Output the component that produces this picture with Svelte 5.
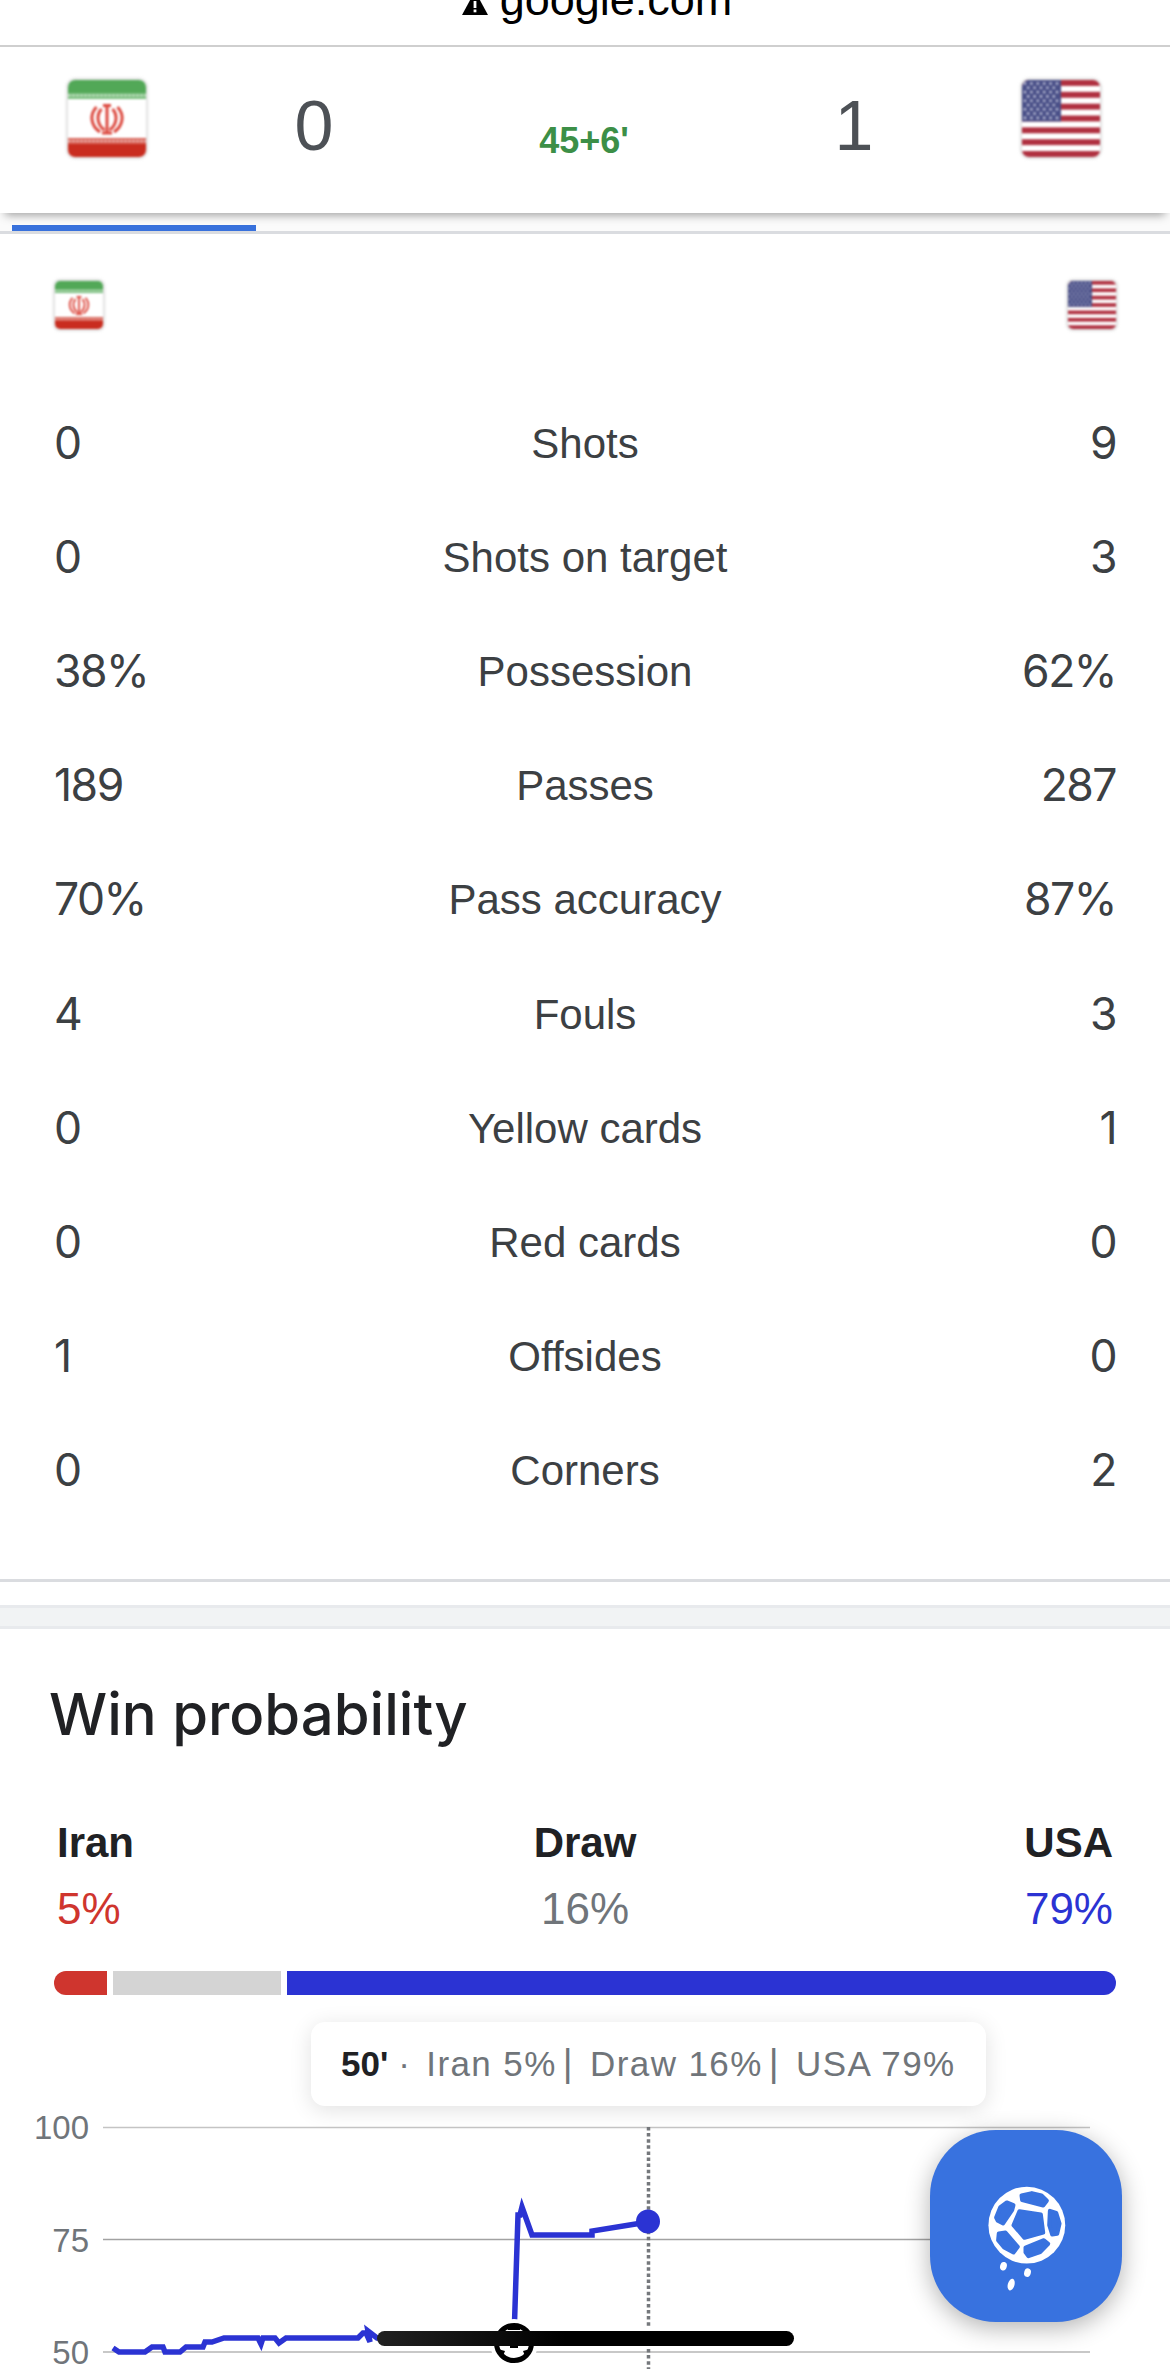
<script>
  const stats = [
    ['0', 'Shots', '9'],
    ['0', 'Shots on target', '3'],
    ['38%', 'Possession', '62%'],
    ['189', 'Passes', '287'],
    ['70%', 'Pass accuracy', '87%'],
    ['4', 'Fouls', '3'],
    ['0', 'Yellow cards', '1'],
    ['0', 'Red cards', '0'],
    ['1', 'Offsides', '0'],
    ['0', 'Corners', '2']
  ];

  const odds = [
    { name: 'Iran', pct: 5, cls: 'red' },
    { name: 'Draw', pct: 16, cls: 'grey' },
    { name: 'USA', pct: 79, cls: 'blue' }
  ];

  const stripes = [0, 2, 4, 6, 8, 10, 12];
  const stars = [];
  for (let r = 0; r < 9; r++) {
    const n = r % 2 ? 5 : 6;
    for (let c = 0; c < n; c++) {
      stars.push({ x: (r % 2 ? 6.2 : 3) + c * 6.4, y: 3.5 + r * 4.3 });
    }
  }

  const line = 'M113 2348 L119 2352 L145 2352 L152 2347 L163 2347 L165 2352 L180 2352 L186 2347 L203 2347 L205 2342 L212 2342 L224 2338 L258 2338 L261 2344 L263 2338 L275 2338 L279 2343 L286 2338 L358 2338 L363 2333 L366 2333 L370 2342 L368 2331 L377 2338 L514 2338 L518 2215 L520 2215 L522 2207 L532 2235 L592 2235 L592 2231 L648 2222';
</script>

{#snippet iran(cls)}
  <div class="flag {cls}">
    <svg viewBox="0 0 78 77" preserveAspectRatio="none">
      <rect width="78" height="77" fill="#fff" />
      <rect width="78" height="19" fill="#52a857" />
      <rect y="13" width="78" height="6" fill="#7dbf80" />
      <path d="M0 15.5H78" stroke="#d6ead6" stroke-width="1.5" stroke-dasharray="3 1" />
      <rect y="58" width="78" height="19" fill="#c92c1f" />
      <rect y="58" width="78" height="6" fill="#d9675c" />
      <path d="M0 61H78" stroke="#f0c4bf" stroke-width="1.5" stroke-dasharray="3 1" />
      <g fill="none" stroke="#dc4a40" stroke-width="3">
        <path d="M39 25V52M35 25.5H43M34 53H44" />
        <path d="M33.5 29C28 35 29 45 36.5 50M44.5 29C50 35 49 45 41.5 50" />
        <path d="M28.5 27C21 35 23 46 32 52M49.5 27C57 35 55 46 46 52" />
      </g>
    </svg>
  </div>
{/snippet}

{#snippet usa(cls)}
  <div class="flag {cls}">
    <svg viewBox="0 0 78 77" preserveAspectRatio="none">
      <rect width="78" height="77" fill="#fff" />
      {#each stripes as s}
        <rect y={s * 5.92} width="78" height="5.92" fill="#b03040" />
      {/each}
      <rect width="39" height="41.5" fill="#4a5088" />
      {#each stars as star}
        <circle cx={star.x} cy={star.y} r="1.3" fill="#c3c6dc" />
      {/each}
    </svg>
  </div>
{/snippet}

<div class="page">
  <header class="address">
    <svg class="warn" viewBox="0 0 26 24" width="26" height="24">
      <path d="M13 0L26 24H0Z" fill="#000" />
      <rect x="11.6" y="10" width="2.8" height="7" fill="#fff" />
      <rect x="11.6" y="18.5" width="2.8" height="2.8" fill="#fff" />
    </svg>
    <span>google.com</span>
  </header>

  <section class="score">
    {@render iran('big')}
    <div class="goals">0</div>
    <div class="minute">45+6'</div>
    <div class="goals">1</div>
    {@render usa('big')}
  </section>
  <div class="tabs"><div class="tab"></div></div>

  <section class="stats">
    <div class="flags">
      {@render iran('small')}
      {@render usa('small')}
    </div>
    {#each stats as [a, label, b]}
      <div class="row">
        <span class="val">{a}</span>
        <span class="label">{label}</span>
        <span class="val right">{b}</span>
      </div>
    {/each}
  </section>

  <div class="band"></div>

  <section class="win">
    <h2>Win probability</h2>
    <div class="odds">
      {#each odds as o}
        <div class="odd">
          <div class="odd-name">{o.name}</div>
          <div class="odd-pct {o.cls}">{o.pct}%</div>
        </div>
      {/each}
    </div>
    <div class="bar">
      {#each odds as o}
        <div class="seg {o.cls}" style="flex-grow: {o.pct}"></div>
      {/each}
    </div>

    <div class="chart">
      <svg viewBox="0 1995 1170 374" width="1170" height="374">
        <path d="M103 2127.5H1090" stroke="#c4c4c4" stroke-width="1.5" />
        <path d="M103 2239.5H1090" stroke="#a2a2a2" stroke-width="1.5" />
        <path d="M103 2352H1090" stroke="#c8c8c8" stroke-width="2" />
        <text x="89" y="2139" class="tick">100</text>
        <text x="89" y="2252" class="tick">75</text>
        <text x="89" y="2364" class="tick">50</text>
        <path d="M648.5 2127V2327M648.5 2349V2369" stroke="#75787c" stroke-width="3.5" stroke-dasharray="3.5 2.6" />
        <path d={line} fill="none" stroke="#2b33d3" stroke-width="5.5" stroke-linejoin="miter" />
        <circle cx="648" cy="2221.5" r="12" fill="#2b33d3" />
        <circle cx="514" cy="2343" r="24" fill="#fff" />
        <circle cx="514" cy="2343" r="17.5" fill="#fff" stroke="#000" stroke-width="5" />
        <path d="M510 2345H518V2348H510ZM498 2349L505 2351L503 2356ZM530 2349L523 2351L525 2356ZM508 2324H520V2330H508Z" fill="#000" />
      </svg>

      <div class="tip">
        <span class="tip-min">50'</span>
        <span class="tip-dot">·</span>
        <span>Iran 5%</span>
        <span class="pipe">|</span>
        <span>Draw 16%</span>
        <span class="pipe">|</span>
        <span>USA 79%</span>
      </div>

      <button class="fab" aria-label="Match">
        <svg viewBox="90 60 575 575" width="192" height="192">
          <circle cx="380" cy="345" r="115" fill="#fff" />
          <g fill="#3872df" stroke="#3872df" stroke-width="12" stroke-linejoin="round">
            <path d="M364 256L395 249L424 256L440 272L429 286L366 270Z" />
            <path d="M449 302L468 308L478 340L471 371L456 373L447 345Z" />
            <path d="M376 412L431 390L444 401L420 426L385 438L376 426Z" />
            <path d="M296 370L316 367L353 410L340 427L312 412L294 390Z" />
            <path d="M320 277L340 285L336 300L309 340L293 332L288 322L300 292Z" />
            <path d="M358 303L422 313L429 367L373 383L340 345Z" />
          </g>
          <g fill="#fff">
            <ellipse cx="310" cy="468" rx="10" ry="13" transform="rotate(15 310 468)" />
            <ellipse cx="382" cy="487" rx="10" ry="13" transform="rotate(15 382 487)" />
            <ellipse cx="333" cy="523" rx="10" ry="18" transform="rotate(15 333 523)" />
          </g>
        </svg>
      </button>

      <div class="home"></div>
    </div>
  </section>
</div>

<style>
  :global(body) {
    margin: 0;
    background: #fff;
  }

  .page {
    width: 1170px;
    height: 2369px;
    overflow: hidden;
    font-family: "Liberation Sans", Arial, sans-serif;
    color: #3c4043;
    background: #fff;
  }

  .address {
    height: 45px;
    padding: 0 0 23px 24px;
    box-sizing: border-box;
    display: flex;
    justify-content: center;
    align-items: flex-end;
    gap: 12px;
    overflow: hidden;
    font-size: 45px;
    line-height: 1;
    color: #000;
  }

  .warn {
    margin-bottom: 7px;
    flex: none;
  }

  .score {
    position: relative;
    z-index: 1;
    height: 166px;
    padding: 0 70px 0 68px;
    display: grid;
    grid-template-columns: 78px 336px 1fr 336px 78px;
    align-items: start;
    border-top: 2px solid #cfcfcf;
    background: #fff;
    box-shadow: 0 7px 9px -5px rgba(0, 0, 0, 0.38);
  }

  .score .flag {
    margin-top: 33px;
  }

  .goals {
    margin-top: 44px;
    text-align: center;
    font-size: 70px;
    line-height: 1;
    color: #4d5156;
  }

  .minute {
    margin-top: 76px;
    text-align: center;
    font-size: 36px;
    line-height: 1;
    font-weight: 700;
    color: #3c8f47;
  }

  .flag {
    overflow: hidden;
    filter: blur(0.8px);
    box-shadow: 0 0 2px 2px #e0e0e0;
  }

  .flag svg {
    display: block;
    width: 100%;
    height: 100%;
  }

  .big {
    width: 78px;
    height: 77px;
    border-radius: 7px;
  }

  .small {
    width: 48px;
    height: 48px;
    border-radius: 5px;
  }

  .tabs {
    height: 18px;
    padding-left: 12px;
    display: flex;
    align-items: flex-end;
    background: #fbfbfb;
  }

  .tab {
    width: 244px;
    height: 6px;
    background: #3871dc;
  }

  .stats {
    padding: 47px 54px 51px;
    border-top: 3px solid #dadce0;
    border-bottom: 3px solid #dadce0;
  }

  .flags {
    display: flex;
    justify-content: space-between;
    padding: 0 0 0 1px;
    margin-bottom: 58px;
  }

  .row {
    height: 114.1px;
    display: grid;
    grid-template-columns: 1fr auto 1fr;
    align-items: center;
  }

  .val {
    font-family: Inter, sans-serif;
    font-size: 44.5px;
    letter-spacing: -1.5px;
    padding-bottom: 2px;
  }

  .right {
    text-align: right;
  }

  .label {
    font-size: 42px;
  }

  .band {
    height: 18px;
    margin-top: 23px;
    background: #f1f3f4;
    border-top: 3px solid #e8eaed;
    border-bottom: 3px solid #e8eaed;
  }

  .win {
    padding-top: 50px;
  }

  h2 {
    margin: 0;
    padding-left: 49px;
    font-family: Inter, sans-serif;
    font-size: 58px;
    line-height: 70px;
    font-weight: 500;
    color: #202124;
  }

  .odds {
    margin-top: 70px;
    padding: 0 57px;
    display: grid;
    grid-template-columns: 1fr auto 1fr;
    text-align: center;
  }

  .odd:first-child {
    text-align: left;
  }

  .odd:last-child {
    text-align: right;
  }

  .odd-name {
    font-size: 42px;
    line-height: 48px;
    font-weight: 700;
    color: #202124;
  }

  .odd-pct {
    margin-top: 18px;
    font-size: 44px;
    line-height: 48px;
  }

  .odd-pct.red {
    color: #cf352e;
  }

  .odd-pct.grey {
    color: #70757a;
  }

  .odd-pct.blue {
    color: #2b33d3;
  }

  .bar {
    margin: 38px 54px 0;
    height: 24px;
    display: flex;
    gap: 6px;
    border-radius: 12px;
    overflow: hidden;
  }

  .seg {
    flex: 0 0 0;
  }

  .seg.red {
    background: #cf352e;
  }

  .seg.grey {
    background: #d4d4d4;
  }

  .seg.blue {
    background: #2b33d3;
  }

  .chart {
    position: relative;
    height: 374px;
  }

  .chart > svg {
    display: block;
  }

  .tick {
    font-size: 33px;
    fill: #70757a;
    text-anchor: end;
  }

  .tip {
    position: absolute;
    left: 311px;
    top: 27px;
    box-sizing: border-box;
    width: 675px;
    height: 84px;
    padding-left: 30px;
    display: flex;
    align-items: center;
    background: #fff;
    border-radius: 14px;
    box-shadow: 0 4px 22px rgba(0, 0, 0, 0.12);
    font-size: 35px;
    letter-spacing: 1.4px;
    white-space: nowrap;
    color: #70757a;
  }

  .tip-min {
    font-weight: 700;
    letter-spacing: 0;
    color: #202124;
  }

  .tip-dot {
    margin: 0 15px 0 10px;
  }

  .pipe {
    margin: 0 16px 0 6px;
    font-size: 38px;
  }

  .fab {
    position: absolute;
    left: 930px;
    top: 135px;
    width: 192px;
    height: 192px;
    padding: 0;
    border: 0;
    border-radius: 66px;
    background: #3872df;
    box-shadow: 0 6px 24px rgba(0, 0, 0, 0.3);
  }

  .fab svg {
    display: block;
  }

  .home {
    position: absolute;
    left: 377px;
    top: 336px;
    width: 417px;
    height: 15px;
    border-radius: 8px;
    background: linear-gradient(90deg, #222, #000 45%);
  }
</style>
